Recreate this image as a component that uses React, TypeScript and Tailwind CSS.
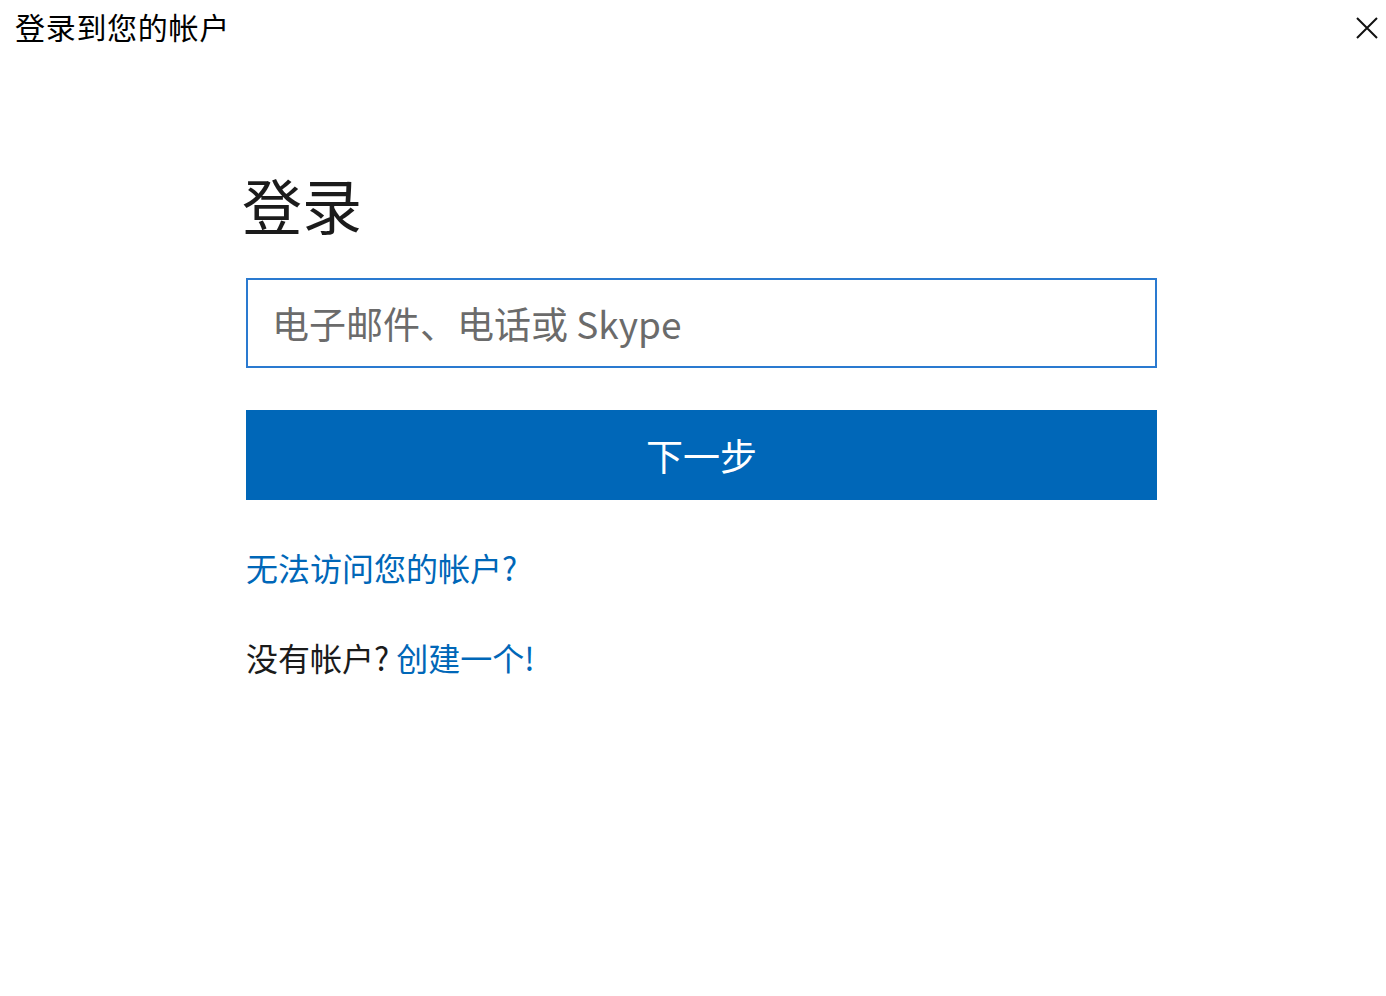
import React from "react";

const font = { fontFamily: '"Noto Sans CJK SC", "Noto Sans", sans-serif' };

export default function App() {
  return (
    <div
      className="w-[1386px] h-[996px] bg-white flex flex-col"
      style={font}
    >
      <div className="flex items-start justify-between pl-[15px] pr-[6px] pt-[11px]">
        <div className="text-[30px] leading-[30px] tracking-[0.7px] text-black">登录到您的帐户</div>
        <button className="w-[26px] h-[26px] mt-[4px] flex items-center justify-center">
          <svg width="22" height="22" viewBox="0 0 22 22" fill="none" stroke="#111" strokeWidth="2">
            <path d="M1 1 L21 21 M21 1 L1 21" />
          </svg>
        </button>
      </div>

      <div className="flex flex-col pl-[246px] w-[1157px] mt-[133px]">
        <h1 className="text-[60px] leading-[60px] text-[#1b1b1b] -ml-[4px]">登录</h1>

        <div className="mt-[44px] h-[90px] border-2 border-[#2a7ad0] flex items-center pl-[24px]">
          <span className="text-[37px] leading-[40px] text-[#6b6b6b]">电子邮件、电话或 Skype</span>
        </div>

        <button className="mt-[42px] h-[90px] bg-[#0067b8] flex items-center justify-center">
          <span className="text-[37px] leading-[40px] text-white">下一步</span>
        </button>

        <a className="mt-[50px] text-[32px] leading-[34px] text-[#0067b8]">无法访问您的帐户?</a>

        <div className="mt-[56px] text-[32px] leading-[34px] text-[#1b1b1b]">
          没有帐户? <span className="text-[#0067b8]">创建一个!</span>
        </div>
      </div>
    </div>
  );
}
